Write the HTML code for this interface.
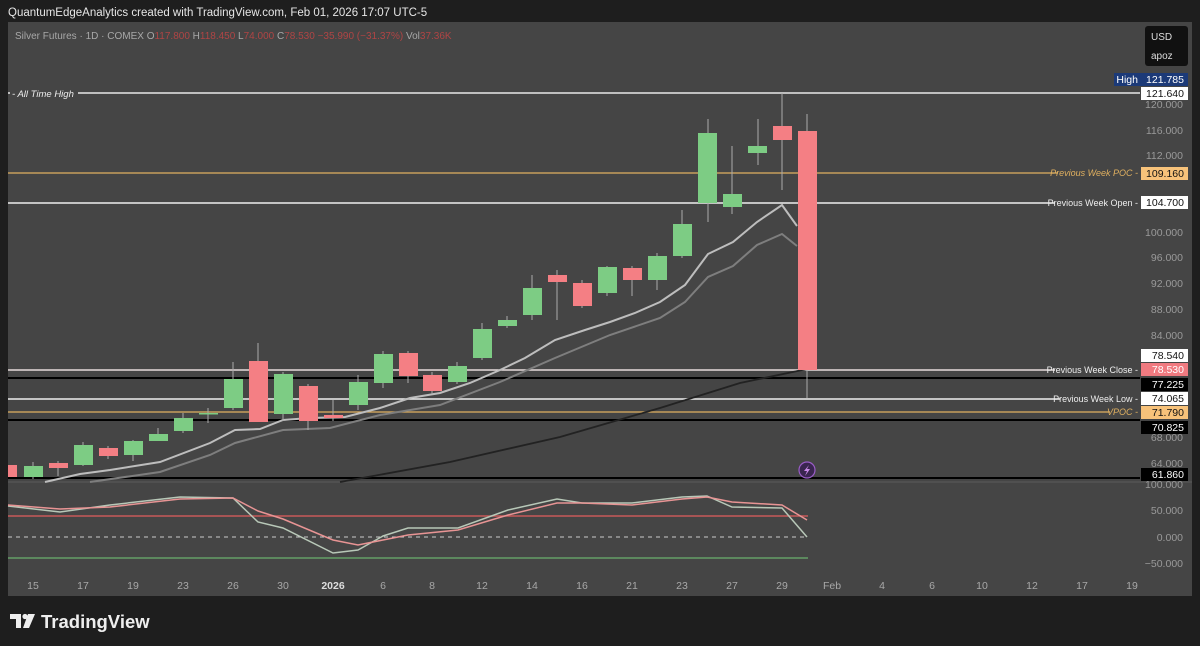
<!DOCTYPE html>
<html><head><meta charset="utf-8"><style>
body{margin:0;width:1200px;height:646px;background:#1e1e1e;overflow:hidden;font-family:"Liberation Sans",sans-serif}
svg{position:absolute;left:0;top:0}
</style></head><body>
<svg width="1200" height="646" viewBox="0 0 1200 646" font-family="Liberation Sans, sans-serif">
<rect x="0" y="0" width="1200" height="646" fill="#1e1e1e"/>
<text x="8" y="16" font-size="11.5" fill="#e6e6e6">QuantumEdgeAnalytics created with TradingView.com, Feb 01, 2026 17:07 UTC-5</text>
<rect x="8" y="22" width="1184" height="574" fill="#454545"/>
<line x1="8" y1="482" x2="1192" y2="482" stroke="#5a5a5a"/>
<text x="15" y="39" font-size="10" fill="#a8a8a8">Silver Futures · 1D · COMEX  O<tspan fill="#b04545">117.800</tspan>  H<tspan fill="#b04545">118.450</tspan>  L<tspan fill="#b04545">74.000</tspan>  C<tspan fill="#b04545">78.530  −35.990 (−31.37%)</tspan>  Vol<tspan fill="#b04545">37.36K</tspan></text>
<rect x="1145" y="26" width="43" height="40" rx="3" fill="#111"/>
<text x="1151" y="40" font-size="10" fill="#ddd">USD</text>
<text x="1151" y="59" font-size="10" fill="#ddd">apoz</text>
<g font-size="10.5" fill="#9a9a9a" text-anchor="end">
<text x="1183" y="108">120.000</text><text x="1183" y="134">116.000</text><text x="1183" y="159">112.000</text>
<text x="1183" y="236">100.000</text><text x="1183" y="261">96.000</text><text x="1183" y="287">92.000</text>
<text x="1183" y="313">88.000</text><text x="1183" y="339">84.000</text><text x="1183" y="441">68.000</text>
<text x="1183" y="467">64.000</text><text x="1183" y="488">100.000</text><text x="1183" y="514">50.000</text>
<text x="1183" y="541">0.000</text><text x="1183" y="567">−50.000</text>
</g>
<line x1="8" y1="93" x2="1140" y2="93" stroke="#e8e8e8" stroke-width="1.5"/>
<rect x="10" y="87" width="68" height="12" fill="#454545"/>
<text x="12" y="97" font-size="9.5" font-style="italic" fill="#eee">- All Time High</text>
<line x1="8" y1="173" x2="1140" y2="173" stroke="#e0b060" stroke-width="1.3"/>
<line x1="8" y1="203" x2="1140" y2="203" stroke="#eee" stroke-width="1.5"/>
<line x1="8" y1="370" x2="1140" y2="370" stroke="#e6dcdc" stroke-width="1.5"/>
<line x1="8" y1="378" x2="1140" y2="378" stroke="#000" stroke-width="2"/>
<line x1="8" y1="399" x2="1140" y2="399" stroke="#eee" stroke-width="1.5"/>
<line x1="8" y1="412" x2="1140" y2="412" stroke="#e0b060" stroke-width="1.3"/>
<line x1="8" y1="420" x2="1140" y2="420" stroke="#000" stroke-width="2"/>
<line x1="8" y1="478" x2="1140" y2="478" stroke="#000" stroke-width="2"/>
<g font-size="9" text-anchor="end">
<rect x="1058" y="167" width="84" height="12" fill="#454545"/>
<text x="1138" y="176" fill="#e0b060" font-style="italic">Previous Week POC -</text>
<rect x="1055" y="197" width="87" height="12" fill="#454545"/>
<text x="1138" y="206" fill="#eee">Previous Week Open -</text>
<rect x="1055" y="364" width="87" height="12" fill="#454545"/>
<text x="1138" y="373" fill="#eee">Previous Week Close -</text>
<rect x="1060" y="393" width="82" height="12" fill="#454545"/>
<text x="1138" y="402" fill="#eee">Previous Week Low -</text>
<rect x="1110" y="406" width="32" height="12" fill="#454545"/>
<text x="1138" y="415" fill="#e0b060" font-style="italic">VPOC -</text>
</g>
<g font-size="10.5" text-anchor="end">
<rect x="1114" y="73" width="28" height="13" fill="#1c3a78"/><text x="1138" y="83" fill="#fff">High</text>
<rect x="1142" y="73" width="46" height="13" fill="#1c3a78"/><text x="1184" y="83" fill="#fff">121.785</text>
<rect x="1141" y="87" width="47" height="13" fill="#fff"/><text x="1184" y="97" fill="#111">121.640</text>
<rect x="1141" y="167" width="47" height="13" fill="#f7c27a"/><text x="1184" y="177" fill="#111">109.160</text>
<rect x="1141" y="196" width="47" height="13" fill="#fff"/><text x="1184" y="206" fill="#111">104.700</text>
<rect x="1141" y="349" width="47" height="13" fill="#fff"/><text x="1184" y="359" fill="#111">78.540</text>
<rect x="1141" y="363" width="47" height="13" fill="#f07a80"/><text x="1184" y="373" fill="#fff">78.530</text>
<rect x="1141" y="378" width="47" height="13" fill="#000"/><text x="1184" y="388" fill="#fff">77.225</text>
<rect x="1141" y="392" width="47" height="13" fill="#fff"/><text x="1184" y="402" fill="#111">74.065</text>
<rect x="1141" y="406" width="47" height="13" fill="#f7c27a"/><text x="1184" y="416" fill="#111">71.790</text>
<rect x="1141" y="421" width="47" height="13" fill="#000"/><text x="1184" y="431" fill="#fff">70.825</text>
<rect x="1141" y="468" width="47" height="13" fill="#000"/><text x="1184" y="478" fill="#fff">61.860</text>
</g>
<polyline fill="none" stroke="#222" stroke-width="1.8" points="340,482 450,462 560,437 660,408 740,383 807,369"/>
<polyline fill="none" stroke="#7e7e7e" stroke-width="2" points="90,482 160,472 210,455 235,443 283,430 330,428 380,415 440,405 500,382 555,358 610,335 660,318 685,302 708,277 733,266 757,245 782,234 797,246"/>
<polyline fill="none" stroke="#bdbdbd" stroke-width="2" points="45,482 80,474 110,470 160,462 210,443 235,430 260,429 283,420 310,418 345,417 380,408 410,398 440,393 470,383 500,370 525,358 555,340 585,330 610,322 635,313 660,302 685,285 708,254 733,242 757,222 782,205 797,226"/>
<g stroke-width="1">
<g fill="#7dcc84" stroke="#aaa">
<line x1="33" y1="462" x2="33" y2="479"/><line x1="83" y1="442" x2="83" y2="466"/><line x1="133" y1="440" x2="133" y2="461"/><line x1="158" y1="428" x2="158" y2="441"/><line x1="183" y1="413" x2="183" y2="433"/><line x1="208" y1="408" x2="208" y2="423"/><line x1="233" y1="362" x2="233" y2="410"/><line x1="283" y1="372" x2="283" y2="421"/><line x1="358" y1="375" x2="358" y2="410"/><line x1="383" y1="351" x2="383" y2="388"/><line x1="457" y1="362" x2="457" y2="384"/><line x1="482" y1="323" x2="482" y2="360"/><line x1="507" y1="316" x2="507" y2="328"/><line x1="532" y1="275" x2="532" y2="320"/><line x1="607" y1="266" x2="607" y2="296"/><line x1="657" y1="253" x2="657" y2="290"/><line x1="682" y1="210" x2="682" y2="258"/><line x1="708" y1="119" x2="708" y2="222"/><line x1="732" y1="146" x2="732" y2="214"/><line x1="758" y1="119" x2="758" y2="165"/>
<line x1="58" y1="461" x2="58" y2="476"/><line x1="108" y1="446" x2="108" y2="459"/><line x1="258" y1="343" x2="258" y2="422"/><line x1="308" y1="384" x2="308" y2="430"/><line x1="333" y1="400" x2="333" y2="421"/><line x1="408" y1="351" x2="408" y2="383"/><line x1="432" y1="372" x2="432" y2="394"/><line x1="557" y1="270" x2="557" y2="320"/><line x1="582" y1="280" x2="582" y2="308"/><line x1="632" y1="266" x2="632" y2="296"/><line x1="782" y1="93" x2="782" y2="190"/><line x1="807" y1="114" x2="807" y2="398"/>
</g>
<g fill="#7dcc84">
<rect x="24" y="466" width="19" height="11"/><rect x="74" y="445" width="19" height="20"/><rect x="124" y="441" width="19" height="14"/><rect x="149" y="434" width="19" height="7"/><rect x="174" y="418" width="19" height="13"/><rect x="199" y="413" width="19" height="1.5"/><rect x="224" y="379" width="19" height="29"/><rect x="274" y="374" width="19" height="40"/><rect x="349" y="382" width="19" height="23"/><rect x="374" y="354" width="19" height="29"/><rect x="448" y="366" width="19" height="16"/><rect x="473" y="329" width="19" height="29"/><rect x="498" y="320" width="19" height="6"/><rect x="523" y="288" width="19" height="27"/><rect x="598" y="267" width="19" height="26"/><rect x="648" y="256" width="19" height="24"/><rect x="673" y="224" width="19" height="32"/><rect x="698" y="133" width="19" height="70"/><rect x="723" y="194" width="19" height="13"/><rect x="748" y="146" width="19" height="7"/>
</g>
<g fill="#f47f84">
<rect x="8" y="465" width="9" height="12"/><rect x="49" y="463" width="19" height="5"/><rect x="99" y="448" width="19" height="8"/><rect x="249" y="361" width="19" height="61"/><rect x="299" y="386" width="19" height="35"/><rect x="324" y="415" width="19" height="3"/><rect x="399" y="353" width="19" height="23"/><rect x="423" y="375" width="19" height="16"/><rect x="548" y="275" width="19" height="7"/><rect x="573" y="283" width="19" height="23"/><rect x="623" y="268" width="19" height="12"/><rect x="773" y="126" width="19" height="14"/><rect x="798" y="131" width="19" height="239"/>
</g>
</g>
<circle cx="807" cy="470" r="8" fill="#3a2550" stroke="#9a5cc8" stroke-width="1.2"/>
<path d="M809 465 L804 471 L807 471 L805 476 L810 469 L807 469 Z" fill="#c98ae8"/>
<line x1="8" y1="516" x2="808" y2="516" stroke="#c85a5a" stroke-width="1.5"/>
<line x1="8" y1="537" x2="808" y2="537" stroke="#ccc" stroke-dasharray="4,4"/>
<line x1="8" y1="558" x2="808" y2="558" stroke="#6ab06e" stroke-width="1.3"/>
<polyline fill="none" stroke="#b8c8b8" stroke-width="1.5" points="8,506 60,512 110,505 180,497 233,498 258,522 283,528 333,553 358,550 383,536 408,528 458,528 508,510 557,499 582,503 632,503 682,497 707,496 732,507 782,508 807,537"/>
<polyline fill="none" stroke="#e89494" stroke-width="1.5" points="8,505 60,509 110,507 180,499 233,498 258,511 283,519 333,540 358,545 383,540 408,535 458,530 508,515 557,503 582,503 632,505 682,499 707,497 732,502 782,505 807,520"/>
<g font-size="10.5" fill="#a8a8a8" text-anchor="middle">
<text x="33" y="589">15</text><text x="83" y="589">17</text><text x="133" y="589">19</text><text x="183" y="589">23</text><text x="233" y="589">26</text><text x="283" y="589">30</text><text x="333" y="589" fill="#ddd" font-weight="bold">2026</text><text x="383" y="589">6</text><text x="432" y="589">8</text><text x="482" y="589">12</text><text x="532" y="589">14</text><text x="582" y="589">16</text><text x="632" y="589">21</text><text x="682" y="589">23</text><text x="732" y="589">27</text><text x="782" y="589">29</text><text x="832" y="589">Feb</text><text x="882" y="589">4</text><text x="932" y="589">6</text><text x="982" y="589">10</text><text x="1032" y="589">12</text><text x="1082" y="589">17</text><text x="1132" y="589">19</text>
</g>
<path d="M10 614 H21 V628 H16 V619 H10 Z" fill="#eee"/>
<circle cx="25" cy="616.5" r="2.6" fill="#eee"/>
<path d="M28 614 H35 L29 628 H23 Z" fill="#eee"/>
<text x="41" y="628" font-size="18.5" font-weight="bold" fill="#eee">TradingView</text>
</svg>
</body></html>
